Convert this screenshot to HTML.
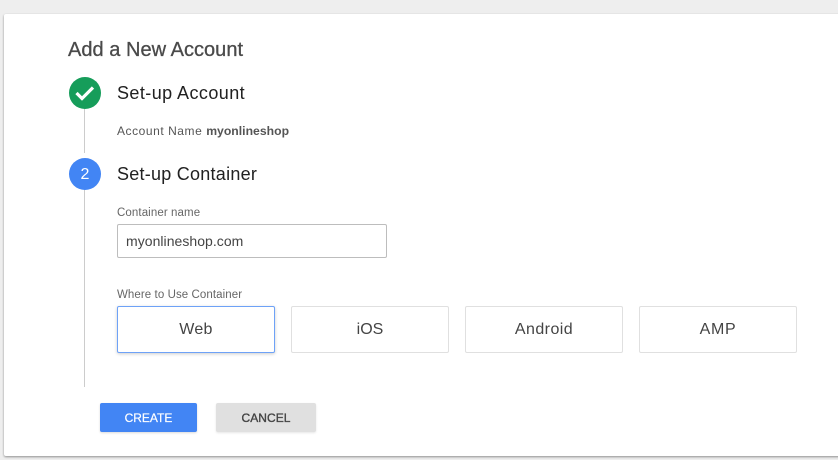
<!DOCTYPE html>
<html>
<head>
<meta charset="utf-8">
<style>
html,body{margin:0;padding:0;}
body{width:838px;height:460px;background:#eeeeee;position:relative;overflow:hidden;font-family:"Liberation Sans",sans-serif;}
.a{position:absolute;white-space:nowrap;}
.card{position:absolute;left:4px;top:14px;width:840px;height:442px;background:#fff;border-radius:2px;box-shadow:0 1px 2px rgba(0,0,0,.4);}
.opt{position:absolute;top:306px;width:156px;height:45px;border:1px solid #e0e0e0;border-radius:2px;background:#fff;text-align:center;line-height:46px;font-size:16px;color:#444;}
</style>
</head>
<body>
<div class="card"></div>
<div class="a" style="left:68px;top:38px;font-size:20px;line-height:24px;color:#4a4a4a;font-weight:400;-webkit-text-stroke:.3px #4a4a4a;letter-spacing:.03px;">Add a New Account</div>

<div class="a" style="left:84px;top:108px;width:1px;height:45px;background:#ccc;"></div>
<div class="a" style="left:84px;top:189px;width:1px;height:198px;background:#ccc;"></div>

<div class="a" style="left:69px;top:77px;width:32px;height:32px;border-radius:50%;background:#169d5a;"></div>
<svg class="a" style="left:69px;top:77px;" width="32" height="32" viewBox="0 0 32 32"><path d="M7.5 16l5.5 5.5L24 10.5" fill="none" stroke="#fff" stroke-width="3.2"/></svg>
<div class="a" style="left:117px;top:82px;font-size:18px;line-height:23px;color:#212121;letter-spacing:.43px;">Set-up Account</div>
<div class="a" style="left:117px;top:124px;font-size:12px;line-height:15px;color:#555;letter-spacing:.55px;">Account Name <b style="color:#555;letter-spacing:.02px;font-size:12.2px;">myonlineshop</b></div>

<div class="a" style="left:69px;top:158px;width:32px;height:32px;border-radius:50%;background:#4285f4;color:#fff;font-size:16px;line-height:33px;text-align:center;">2</div>
<div class="a" style="left:117px;top:163px;font-size:18px;line-height:23px;color:#212121;letter-spacing:.25px;">Set-up Container</div>

<div class="a" style="left:117px;top:206px;font-size:11.5px;line-height:14px;color:#666;letter-spacing:.1px;">Container name</div>
<div class="a" style="left:117px;top:224px;width:268px;height:32px;border:1px solid #bdbdbd;border-radius:2px;background:#fff;font-size:14px;line-height:33px;color:#444;text-indent:8px;letter-spacing:.04px;">myonlineshop.com</div>

<div class="a" style="left:117px;top:288px;font-size:11.5px;line-height:14px;color:#666;letter-spacing:.08px;">Where to Use Container</div>
<div class="opt" style="left:117px;border-color:#6ea2f7;box-shadow:0 1px 3px rgba(0,0,0,.2);letter-spacing:.3px;">Web</div>
<div class="opt" style="left:291px;">iOS</div>
<div class="opt" style="left:465px;letter-spacing:.45px;">Android</div>
<div class="opt" style="left:639px;letter-spacing:.7px;">AMP</div>

<div class="a" style="left:100px;top:403px;width:97px;height:29px;background:#4285f4;border-radius:2px;box-shadow:0 1px 2px rgba(0,0,0,.15);color:#fff;font-size:12px;line-height:30px;text-align:center;-webkit-text-stroke:.2px #fff;">CREATE</div>
<div class="a" style="left:216px;top:403px;width:100px;height:29px;background:#e0e0e0;border-radius:2px;box-shadow:0 1px 2px rgba(0,0,0,.1);color:#444;font-size:12px;font-weight:400;-webkit-text-stroke:.35px #444;line-height:30px;text-align:center;letter-spacing:.05px;">CANCEL</div>
</body>
</html>
